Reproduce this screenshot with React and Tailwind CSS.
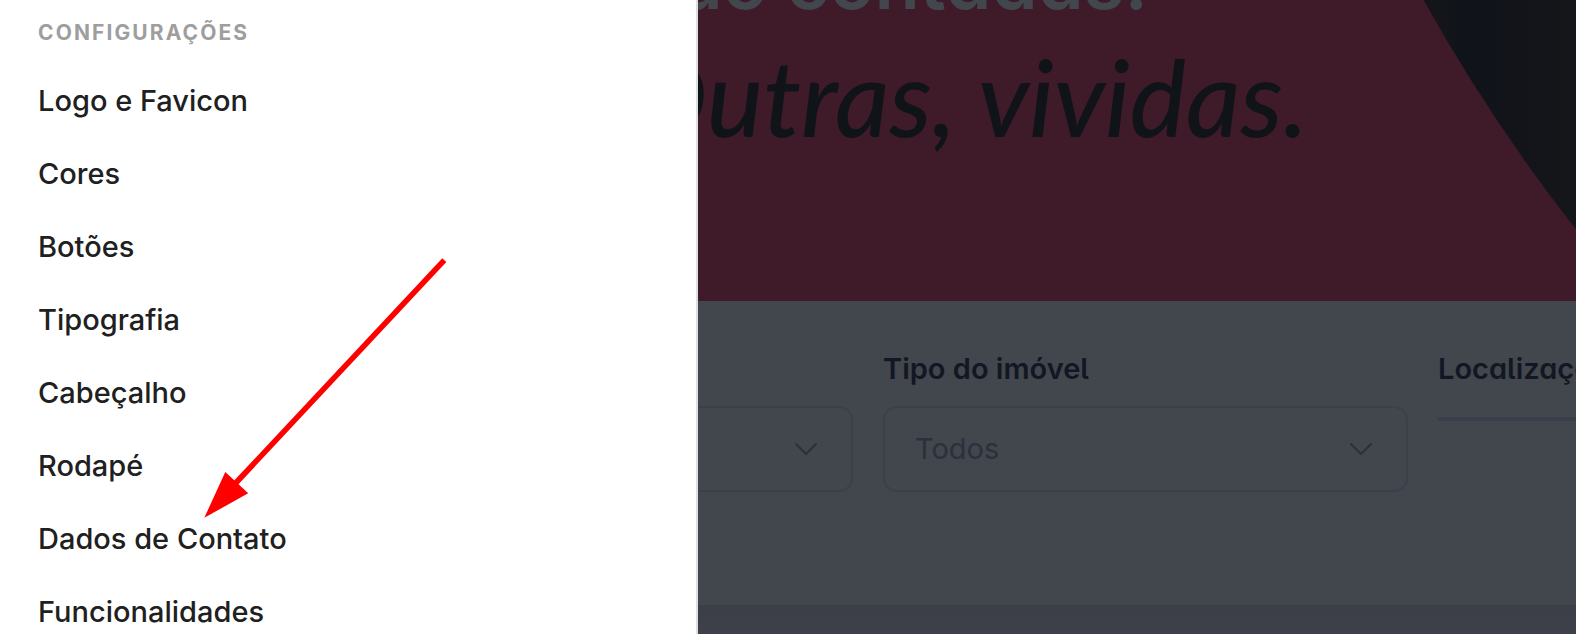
import React from "react";

const menu = [
  "Logo e Favicon",
  "Cores",
  "Botões",
  "Tipografia",
  "Cabeçalho",
  "Rodapé",
  "Dados de Contato",
  "Funcionalidades",
];

function Sidebar() {
  return (
    <aside className="relative z-10 w-[698px] shrink-0 border-r-2 border-[#dcdee0] bg-white pl-[38px] pt-[15px]">
      <h2 className="text-[21px] font-bold uppercase leading-9 tracking-widest text-[#9e9e9e]">
        Configurações
      </h2>
      <nav className="mt-[13px]">
        <ul>
          {menu.map((item) => (
            <li key={item}>
              <a href="#" className="flex h-[73px] items-center text-[29px] font-medium text-[#202020]">
                {item}
              </a>
            </li>
          ))}
        </ul>
      </nav>
      <svg
        className="pointer-events-none absolute left-[200px] top-[256px]"
        width="250"
        height="266"
        viewBox="200 256 250 266"
        aria-hidden="true"
      >
        <line x1="444.3" y1="260.2" x2="232" y2="487" stroke="#ff0000" strokeWidth="5.6" />
        <polygon points="204.3,517.8 225.3,472 248.2,493.3" fill="#ff0000" />
      </svg>
    </aside>
  );
}

function Hero() {
  return (
    <section className="relative flex h-[301px] flex-col items-end justify-end overflow-hidden bg-[#3f1b2a]">
      <svg
        className="absolute right-0 top-0"
        width="160"
        height="232"
        viewBox="1416 0 160 232"
        aria-hidden="true"
      >
        <defs>
          <linearGradient id="disc" x1="0" x2="1">
            <stop offset="0.1" stopColor="#131519" />
            <stop offset="0.3" stopColor="#0f131a" />
            <stop offset="0.6" stopColor="#13141a" />
            <stop offset="1" stopColor="#151619" />
          </linearGradient>
        </defs>
        <path d="M1423.500 0 Q1491 121 1576 229.500 V0Z" fill="url(#disc)" />
      </svg>
      <p className="whitespace-nowrap pr-[428px] text-[74px] font-semibold leading-[80px] text-[#42464d]">
        são contadas.
      </p>
      <p className="mb-[131px] whitespace-nowrap pr-[268px] font-['Lato',sans-serif] text-[106px] font-medium italic leading-[148px] text-[#101419]">
        Outras, vividas.
      </p>
    </section>
  );
}

function SelectField({ id, label }) {
  return (
    <div className="w-[525px] shrink-0">
      <label htmlFor={id} className="block text-[29px] font-semibold leading-10 text-[#121723]">
        {label}
      </label>
      <div className="relative mt-[17px]">
        <select
          id={id}
          className="h-[86px] w-full appearance-none rounded-[14px] border-2 border-[#3b404c] bg-transparent pl-[30px] text-[29px] text-[#2c303d]"
        >
          <option>Todos</option>
        </select>
        <svg
          className="pointer-events-none absolute right-[34px] top-[35px]"
          width="26"
          height="16"
          viewBox="0 0 26 16"
          fill="none"
          stroke="#2c303d"
          strokeWidth="2"
          strokeLinecap="round"
          strokeLinejoin="round"
          aria-hidden="true"
        >
          <path d="M3 3 L13 13 L23 3" />
        </svg>
      </div>
    </div>
  );
}

export default function App() {
  return (
    <div className="flex h-screen overflow-hidden bg-[#42464d] font-['Inter',sans-serif]">
      <Sidebar />
      <main className="flex min-w-0 flex-1 flex-col overflow-hidden [font-feature-settings:'cv05','cv11']">
        <Hero />
        <form className="-ml-[370px] flex h-[304px] shrink-0 gap-[30px] pt-12">
          <SelectField id="finalidade" label="Finalidade" />
          <SelectField id="tipo" label="Tipo do imóvel" />
          <div className="w-[525px] shrink-0">
            <p className="text-[29px] font-semibold leading-10 text-[#121723]">Localização</p>
            <div className="mt-7 h-1 rounded-l-sm bg-[#3b3f4a]" />
          </div>
        </form>
        <div className="flex-1 bg-linear-to-b from-[#3b3e46] to-[#3e4149]" />
      </main>
    </div>
  );
}
